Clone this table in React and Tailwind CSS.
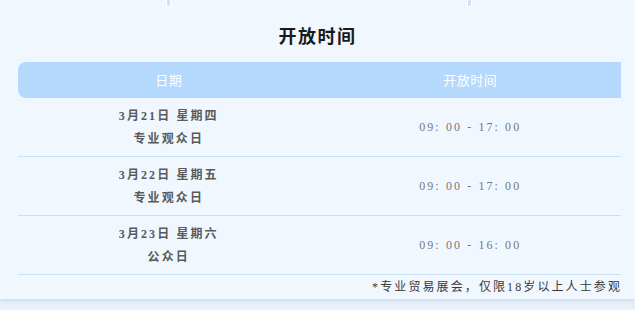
import React from "react";

const rows = [
  { date: "3月21日 星期四", kind: "专业观众日", time: "09: 00 - 17: 00" },
  { date: "3月22日 星期五", kind: "专业观众日", time: "09: 00 - 17: 00" },
  { date: "3月23日 星期六", kind: "公众日", time: "09: 00 - 16: 00" },
];

const cjk = { fontFamily: '"Noto Sans CJK SC", "Noto Sans", sans-serif' };
const mixed = { fontFamily: '"Liberation Serif", "Noto Sans CJK SC", serif' };

export default function App() {
  return (
    <div className="w-[635px] h-[310px] overflow-hidden bg-[#e8f1fb]">
      <div className="h-[299px] bg-[#f0f7ff] shadow-[0_2px_4px_rgba(150,180,215,0.35)]">
        {/* tab stubs hanging from the section above */}
        <div className="ml-[18px] w-[603px] grid grid-cols-2 h-[7px]">
          <div className="flex justify-center">
            <div className="w-[5px] h-[7px] -ml-[1px] bg-[#cfe3fb] border border-t-0 border-white rounded-b-[1px]" />
          </div>
          <div className="flex justify-center">
            <div className="w-[5px] h-[7px] -ml-[1px] bg-[#cfe3fb] border border-t-0 border-white rounded-b-[1px]" />
          </div>
        </div>

        <h2
          className="mt-[17px] h-[22px] leading-[22px] text-center text-[18px] font-bold tracking-[1.5px] text-[#1a1a1a]"
          style={cjk}
        >
          开放时间
        </h2>

        <div className="ml-[18px] mt-[16px] w-[603px]">
          <div
            className="grid grid-cols-2 h-[36px] items-center bg-[#b5d8fd] rounded-l-[8px] text-white text-[13px] tracking-[0.5px]"
            style={cjk}
          >
            <div className="text-center">日期</div>
            <div className="text-center">开放时间</div>
          </div>

          {rows.map((r) => (
            <div
              key={r.date}
              className="grid grid-cols-2 h-[59px] items-center border-b border-[#cbe0f3]"
            >
              <div
                className="flex flex-col items-center text-[12px] font-bold text-[#5a5a5a] tracking-[2.1px] leading-[23px] pt-[1px]"
                style={mixed}
              >
                <span>{r.date}</span>
                <span>{r.kind}</span>
              </div>
              <div
                className="text-center text-[12px] text-[#777777] tracking-[2.1px]"
                style={mixed}
              >
                {r.time}
              </div>
            </div>
          ))}

          <div
            className="h-[24px] flex items-center justify-end text-[12px] text-[#3a3a3a] tracking-[2.1px] -mr-[1px]"
            style={mixed}
          >
            *专业贸易展会，仅限18岁以上人士参观
          </div>
        </div>
      </div>
    </div>
  );
}
